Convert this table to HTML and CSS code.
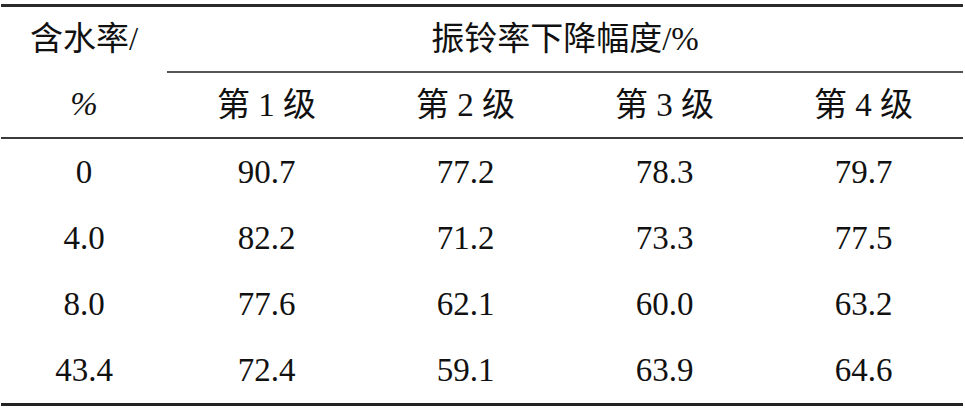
FILE: index.html
```html
<!DOCTYPE html>
<html>
<head>
  <meta charset="UTF-8">
  <title>含水率与振铃率下降幅度</title>
  <link rel="stylesheet" href="styles.css">
</head>
<body>
  <table class="data-table">
    <colgroup>
      <col class="col-first">
      <col class="col-level">
      <col class="col-level">
      <col class="col-level">
      <col class="col-level">
    </colgroup>
    <thead>
      <tr class="head-top">
        <th rowspan="2" class="moisture">
          <div class="head-line">含水率/</div>
          <div class="head-line">%</div>
        </th>
        <th colspan="4" class="group">振铃率下降幅度/%</th>
      </tr>
      <tr class="head-sub">
        <th>第 1 级</th>
        <th>第 2 级</th>
        <th>第 3 级</th>
        <th>第 4 级</th>
      </tr>
    </thead>
    <tbody>
      <tr>
        <td>0</td>
        <td>90.7</td>
        <td>77.2</td>
        <td>78.3</td>
        <td>79.7</td>
      </tr>
      <tr>
        <td>4.0</td>
        <td>82.2</td>
        <td>71.2</td>
        <td>73.3</td>
        <td>77.5</td>
      </tr>
      <tr>
        <td>8.0</td>
        <td>77.6</td>
        <td>62.1</td>
        <td>60.0</td>
        <td>63.2</td>
      </tr>
      <tr class="last">
        <td>43.4</td>
        <td>72.4</td>
        <td>59.1</td>
        <td>63.9</td>
        <td>64.6</td>
      </tr>
    </tbody>
  </table>
</body>
</html>
```

FILE: styles.css
```css
body {
  margin: 0;
  padding: 4px 0 0 1px;
  background: #fff;
  color: #111;
  font-family: "Liberation Serif", "Noto Sans CJK SC", serif;
}

.data-table {
  width: 961px;
  border-collapse: collapse;
  table-layout: fixed;
  font-size: 33px;
}

.col-first {
  width: 166px;
}

.col-level {
  width: 199px;
}

.data-table th,
.data-table td {
  padding: 0;
  text-align: center;
  vertical-align: middle;
  font-weight: normal;
  line-height: 1;
}

/* 表头 */
.head-top th {
  border-top: 3px solid #2b2b2b;
  height: 63px;
}

.head-top .group {
  border-bottom: 2px solid #555;
}

.head-sub th {
  height: 63px;
}

.moisture {
  padding: 0;
}

.head-line {
  height: 65px;
  line-height: 65px;
}

.head-line + .head-line {
  font-style: italic;
}

thead tr:last-child th,
.moisture {
  border-bottom: 2px solid #3a3a3a;
}

/* 数据行 */
tbody td {
  height: 66px;
}

tbody tr.last td {
  border-bottom: 3px solid #222;
}
```
